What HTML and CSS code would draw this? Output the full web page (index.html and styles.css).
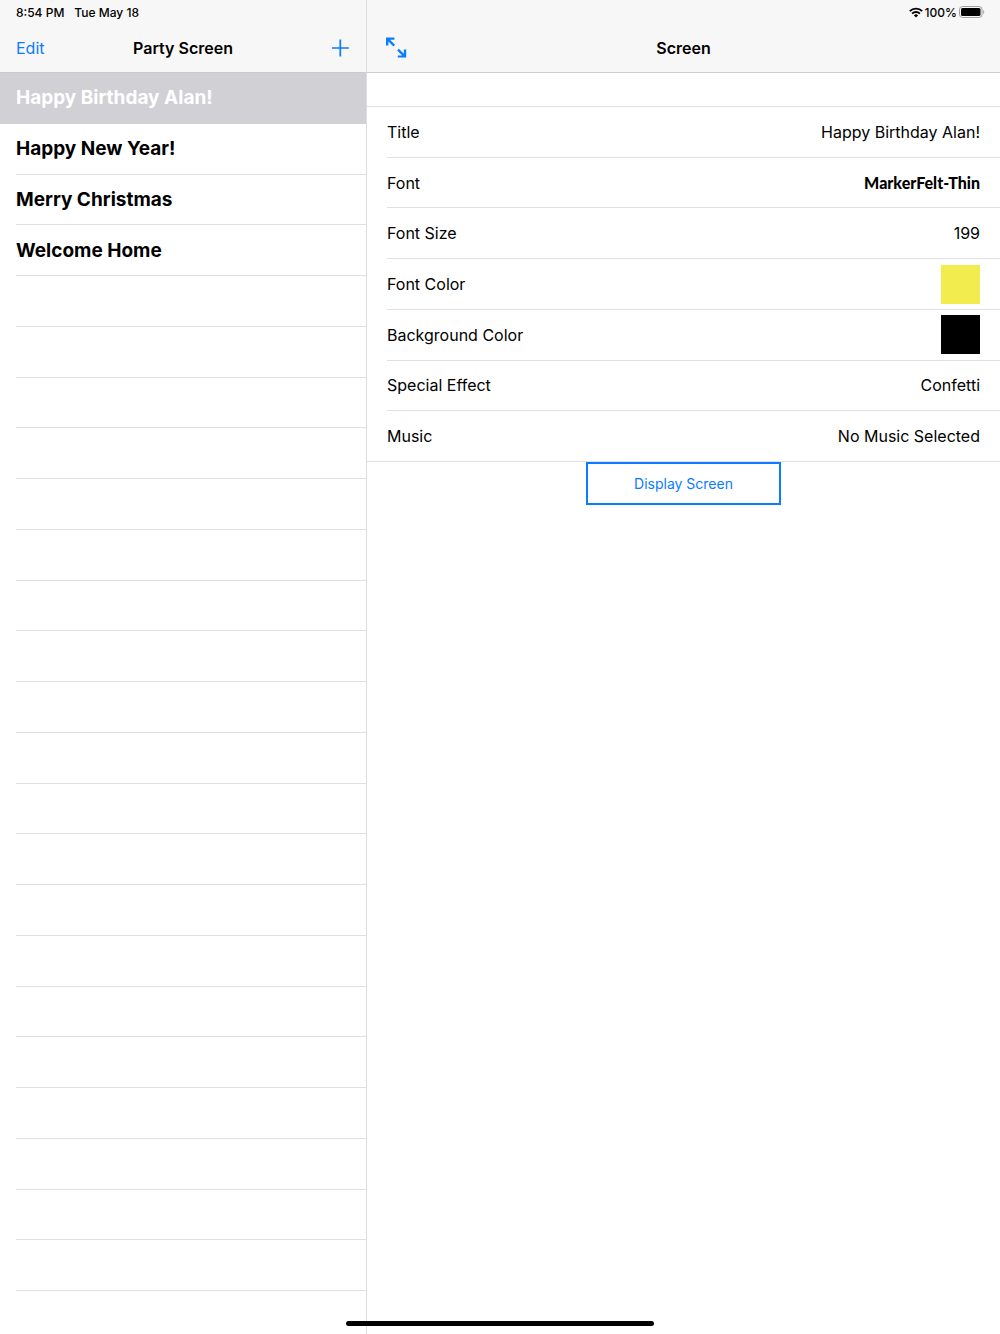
FILE: index.html
```html
<!DOCTYPE html>
<html lang="en">
<head>
    <meta charset="UTF-8">
    <meta name="viewport" content="width=device-width, initial-scale=1.0">
    <title>Party Screen</title>
    <link rel="stylesheet" href="styles.css">
</head>
<body>
    <div class="split-view">
        <aside class="pane sidebar">
            <header class="pane-header">
                <div class="status">
                    <span>8:54 PM</span>
                    <span>Tue May 18</span>
                </div>
                <div class="nav-bar">
                    <button class="nav-button" type="button">Edit</button>
                    <h1>Party Screen</h1>
                    <button class="nav-button nav-end" type="button" aria-label="Add screen">
                        <svg width="18" height="18" viewBox="0 0 18 18" fill="none" stroke="currentColor" stroke-width="1.7">
                            <path d="M8.3 .5v17M0 9h16.8"/>
                        </svg>
                    </button>
                </div>
            </header>
            <ul class="screens">
                <li class="selected"><button type="button">Happy Birthday Alan!</button></li>
                <li><button type="button">Happy New Year!</button></li>
                <li><button type="button">Merry Christmas</button></li>
                <li><button type="button">Welcome Home</button></li>
                <li></li>
                <li></li>
                <li></li>
                <li></li>
                <li></li>
                <li></li>
                <li></li>
                <li></li>
                <li></li>
                <li></li>
                <li></li>
                <li></li>
                <li></li>
                <li></li>
                <li></li>
                <li></li>
                <li></li>
                <li></li>
                <li></li>
                <li></li>
            </ul>
        </aside>

        <main class="pane detail">
            <header class="pane-header">
                <div class="status status-end">
                    <svg width="14" height="11" viewBox="0 0 14 11" fill="none" stroke="#000" stroke-width="1.9">
                        <path d="M.8 4.2a8.8 8.8 0 0 1 12.4 0"/>
                        <path d="M3.1 6.6a5.5 5.5 0 0 1 7.8 0"/>
                        <path d="M7 10.6 4.9 8.4a3 3 0 0 1 4.2 0z" fill="#000" stroke="none"/>
                    </svg>
                    <span>100%</span>
                    <svg class="battery" width="26" height="12" viewBox="0 0 26 12">
                        <rect x=".5" y=".5" width="22.5" height="11" rx="3" fill="none" stroke="#a0a0a2"/>
                        <rect x="2" y="2" width="19.5" height="8" rx="1.6"/>
                        <path d="M24.2 4v4c1.4-.6 1.4-3.4 0-4z" fill="#a0a0a2"/>
                    </svg>
                </div>
                <div class="nav-bar">
                    <button class="nav-button" type="button" aria-label="Full screen">
                        <svg width="20" height="20" viewBox="0 0 20 20" fill="currentColor" overflow="visible">
                            <path d="M-1-.4h8.4v2.2H3l5 5L6.4 8.4l-5-5v4.2H-1z"/>
                            <path d="M19.2 19.6h-8.4v-2.2h4.4l-5-5 1.6-1.6 5 5v-4.2h2.4z"/>
                        </svg>
                    </button>
                    <h2>Screen</h2>
                </div>
            </header>
            <dl class="settings">
                <div><dt>Title</dt><dd>Happy Birthday Alan!</dd></div>
                <div><dt>Font</dt><dd class="marker">MarkerFelt-Thin</dd></div>
                <div><dt>Font Size</dt><dd>199</dd></div>
                <div><dt>Font Color</dt><dd class="swatch yellow"></dd></div>
                <div><dt>Background Color</dt><dd class="swatch black"></dd></div>
                <div><dt>Special Effect</dt><dd>Confetti</dd></div>
                <div><dt>Music</dt><dd>No Music Selected</dd></div>
            </dl>
            <button class="display-button" type="button">Display Screen</button>
        </main>
    </div>
    <div class="home-indicator"></div>
</body>
</html>
```
FILE: styles.css
```css
* {
    box-sizing: border-box;
}

body {
    margin: 0;
    font-family: Inter, "Liberation Sans", sans-serif;
    font-size: 16px;
    color: #000;
    background: #fff;
}

button {
    padding: 0;
    border: none;
    background: none;
    font: inherit;
    color: inherit;
    cursor: pointer;
}

svg {
    display: block;
}

.split-view {
    display: grid;
    grid-template-columns: 367fr 633fr;
    min-height: 100vh;
}

.pane {
    display: flex;
    flex-direction: column;
}

.sidebar {
    border-right: 1px solid #dddddf;
}

.pane-header {
    background: #f7f7f7;
    border-bottom: 1px solid #cbcbcd;
}

.status {
    display: flex;
    align-items: center;
    gap: 10px;
    height: 24px;
    padding: 0 16px;
    font-size: 12px;
    font-weight: 500;
}

.status-end {
    justify-content: flex-end;
    gap: 2px;
    padding-right: 15px;
}

.nav-bar {
    display: grid;
    grid-template-columns: 1fr auto 1fr;
    align-items: center;
    height: 48px;
    padding: 0 16px;
}

.nav-bar h1,
.nav-bar h2 {
    margin: 0;
    font-size: 16px;
    font-weight: 600;
}

.nav-button {
    justify-self: start;
    color: #0a7cff;
}

.nav-end {
    justify-self: end;
}

.detail .nav-bar {
    padding: 0 20px;
}

/* saved screens, then blank rows down to the bottom */
.screens {
    flex: 1;
    display: grid;
    grid-template-rows: repeat(24, minmax(44px, 1fr));
    margin: 0;
    padding: 0 0 43px;
    list-style: none;
}

.screens li {
    display: flex;
    margin-left: 16px;
    border-bottom: 1px solid #e0e0e2;
}

.screens button {
    flex: 1;
    text-align: left;
    font-size: 19px;
    font-weight: 700;
}

.screens .selected {
    margin-left: 0;
    padding-left: 16px;
    background: #d1d0d5;
    border-bottom-color: #d1d0d5;
    color: #fff;
}

.settings {
    display: flex;
    flex-direction: column;
    height: 356px;
    margin: 33px 0 0;
    border-top: 1px solid #e0e0e2;
    border-bottom: 1px solid #e0e0e2;
}

.settings div {
    flex: 1;
    display: flex;
    align-items: center;
    justify-content: space-between;
    margin-left: 20px;
    padding-right: 20px;
}

.settings div + div {
    border-top: 1px solid #e0e0e2;
}

.settings dd {
    margin: 0;
}

.settings .marker {
    font-family: "Marker Felt", Lato, sans-serif;
    font-weight: 900;
}

.settings .swatch {
    width: 39px;
    height: 39px;
}

.yellow {
    background: #f2ec4e;
}

.black {
    background: #000;
}

.display-button {
    align-self: center;
    width: 195px;
    height: 43px;
    border: 2px solid #0a7cff;
    color: #0a7cff;
    font-size: 14px;
}

.home-indicator {
    position: fixed;
    bottom: 8px;
    left: 50%;
    width: 308px;
    height: 5px;
    border-radius: 3px;
    background: #000;
    transform: translateX(-50%);
}
```
